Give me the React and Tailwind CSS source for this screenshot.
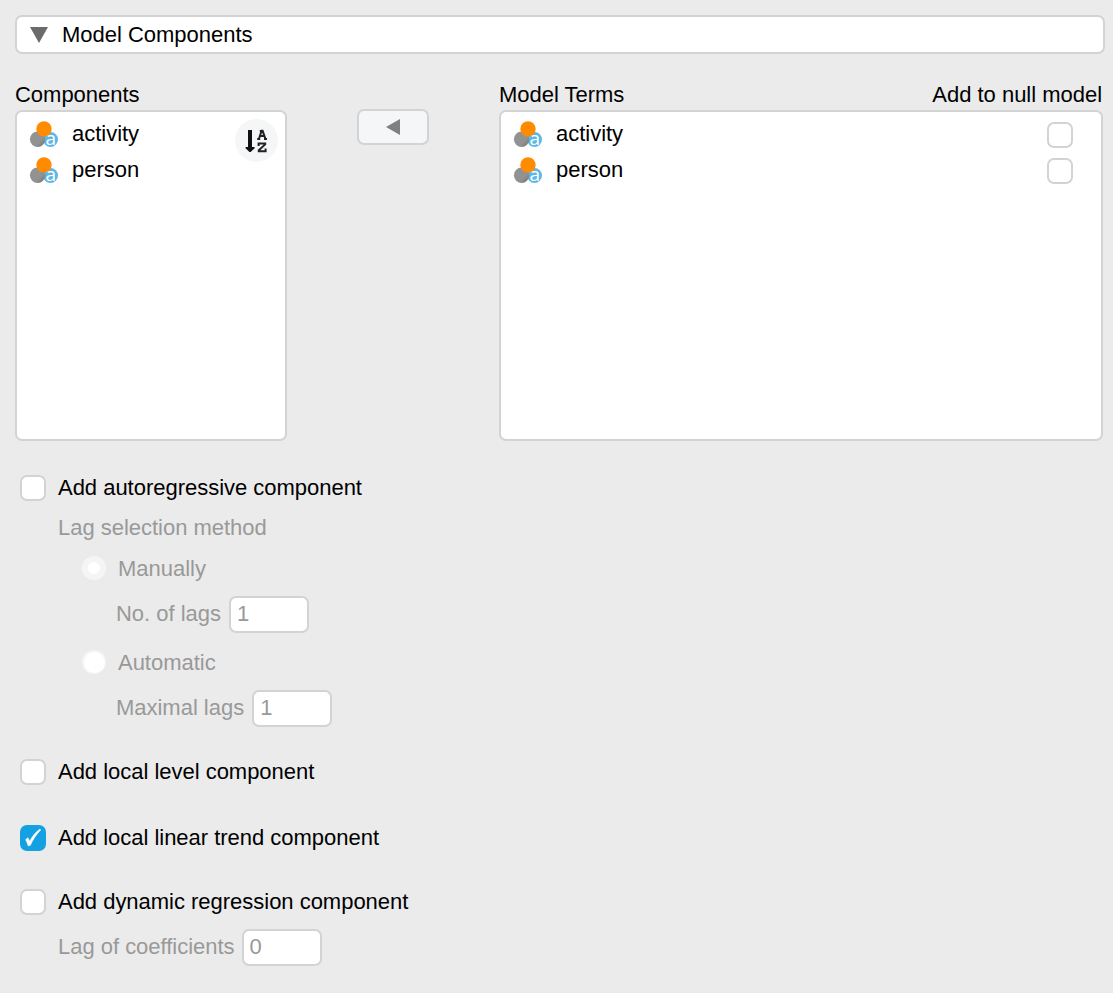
import React from "react";

function VariableIcon() {
  return (
    <svg width="28" height="27" viewBox="0 0 28 27" className="block shrink-0 overflow-visible">
      <defs>
        <linearGradient id="greyBall" x1="0" y1="0" x2="1" y2="1">
          <stop offset="0.65" stopColor="#929292" />
          <stop offset="1" stopColor="#6c6c6c" />
        </linearGradient>
      </defs>
      <circle cx="20.5" cy="18.5" r="7.5" fill="#5db8e6" />
      <circle cx="7.6" cy="18.2" r="7.7" fill="url(#greyBall)" />
      <circle cx="14" cy="7.9" r="7.7" fill="#ff8c00" />
      <text x="20.8" y="23.6" textAnchor="middle" fontFamily="Open Sans, sans-serif" fontWeight="500" fontSize="19" fill="#fff">
        a
      </text>
    </svg>
  );
}

function SortButton() {
  return (
    <button className="flex size-[43px] items-center justify-center rounded-full bg-[#f5f6f8]">
      <svg width="23" height="24" viewBox="0 0 23 24" className="block">
        <path d="M3 1h4v17h2.6v1.2L5.6 23H4.4L.6 19.2V18H3z" fill="#111" />
        <g fill="none" stroke="#222" strokeWidth="2">
          <path d="M14 9.8 16.6 1.8h1l2.8 8M14.6 7h5M12.2 10h3M19 10h3M14.8 2h2.5" />
          <path d="M13.6 17v-2.6h6.6v1L13.8 21.2v1h6.8v-2.6" />
        </g>
      </svg>
    </button>
  );
}

function CheckBox({ checked }) {
  if (checked) {
    return (
      <span className="block size-[26px] shrink-0 rounded-[7px] bg-[#14a1e3]">
        <svg width="26" height="26" viewBox="0 0 26 26" className="block">
          <path d="M5.6 14.6 8 12.8 9.8 16.2C12 11.5 15.6 6.9 20 4L20.7 5C16.8 8.8 12.9 14.5 10.3 20.4L8.1 20.8C7.4 18.6 6.6 16.4 5.6 14.6Z" fill="#fff" stroke="#fff" strokeWidth="0.5" />
        </svg>
      </span>
    );
  }
  return <span className="block size-[26px] shrink-0 rounded-[7px] border-2 border-[#d3d3d3] bg-white" />;
}

function Radio({ selected }) {
  return (
    <span className="flex size-6 shrink-0 items-center justify-center rounded-full bg-[#f5f5f5]">
      <span className={selected ? "block size-3 rounded-full bg-white" : "block size-[21px] rounded-full bg-white"} />
    </span>
  );
}

function Option({ label, checked }) {
  return (
    <label className="flex h-[26px] items-center gap-3">
      <CheckBox checked={checked} />
      <span className="leading-6">{label}</span>
    </label>
  );
}

function RadioOption({ label, selected }) {
  return (
    <label className="flex h-6 items-center gap-3 pl-[62px] text-[#999]">
      <Radio selected={selected} />
      <span className="mt-0.5 leading-6">{label}</span>
    </label>
  );
}

function NumberField({ label, value, tight }) {
  return (
    <label className={tight ? "flex h-[37px] items-center gap-[7px] text-[#999]" : "flex h-[37px] items-center gap-2 text-[#999]"}>
      <span className="-mt-px leading-6">{label}</span>
      <span className="flex h-[37px] w-20 items-center rounded-[7px] border-2 border-[#d3d3d3] bg-white pb-0.5 pl-1.5 leading-6">
        {value}
      </span>
    </label>
  );
}

function Variable({ name }) {
  return (
    <div className="flex h-9 items-start">
      <VariableIcon />
      <span className="ml-3.5 mt-px leading-6">{name}</span>
    </div>
  );
}

export default function App() {
  return (
    <div className="h-[993px] w-[1113px] overflow-hidden bg-[#ebebeb] pt-[15px] font-['Liberation_Sans',Arial,sans-serif] text-[22px] tracking-[-0.02px] text-black">
      <div className="ml-[15px] flex h-[39px] w-[1090px] items-center rounded-[7px] border-2 border-[#d3d3d3] bg-white pl-[13px]">
        <svg width="18" height="16" viewBox="0 0 18 16" className="block">
          <path d="M0 0h18L9 16z" fill="#6b6b6b" />
        </svg>
        <span className="ml-3.5 leading-6">Model Components</span>
      </div>

      <div className="ml-[15px] mt-7 flex w-[1088px]">
        <section className="w-[272px]">
          <h2 className="h-7 pt-px leading-6">Components</h2>
          <div className="flex h-[331px] justify-between rounded-[7px] border-2 border-[#d3d3d3] bg-white pl-[13px] pr-[7px] pt-[9px]">
            <div>
              <Variable name="activity" />
              <Variable name="person" />
            </div>
            <div className="-mt-0.5">
              <SortButton />
            </div>
          </div>
        </section>

        <button className="ml-[70px] mt-[27px] flex h-9 w-[72px] items-center justify-center rounded-[7px] border-2 border-[#d3d3d3] bg-[#f5f6f8]">
          <svg width="14" height="16" viewBox="0 0 14 16" className="block">
            <path d="M14 0v16L0 8z" fill="#808080" />
          </svg>
        </button>

        <section className="ml-[70px] w-[604px]">
          <div className="flex h-7 justify-between pr-px pt-px leading-6">
            <h2>Model Terms</h2>
            <span>Add to null model</span>
          </div>
          <div className="flex h-[331px] justify-between rounded-[7px] border-2 border-[#d3d3d3] bg-white pl-[13px] pr-7 pt-[9px]">
            <div>
              <Variable name="activity" />
              <Variable name="person" />
            </div>
            <div className="flex flex-col gap-2.5 pt-px">
              <CheckBox />
              <CheckBox />
            </div>
          </div>
        </section>
      </div>

      <div className="ml-5 mt-[34px]">
        <Option label="Add autoregressive component" />
        <div className="ml-[38px] mt-[15px] h-6 leading-6 text-[#999]">Lag selection method</div>
        <div className="mt-4">
          <RadioOption label="Manually" selected />
        </div>
        <div className="ml-24 mt-4">
          <NumberField label="No. of lags" value="1" />
        </div>
        <div className="mt-[17px]">
          <RadioOption label="Automatic" />
        </div>
        <div className="ml-24 mt-4">
          <NumberField label="Maximal lags" value="1" />
        </div>
        <div className="mt-8">
          <Option label="Add local level component" />
        </div>
        <div className="mt-10">
          <Option label="Add local linear trend component" checked />
        </div>
        <div className="mt-[38px]">
          <Option label="Add dynamic regression component" />
        </div>
        <div className="ml-[38px] mt-3.5">
          <NumberField label="Lag of coefficients" value="0" tight />
        </div>
      </div>
    </div>
  );
}
